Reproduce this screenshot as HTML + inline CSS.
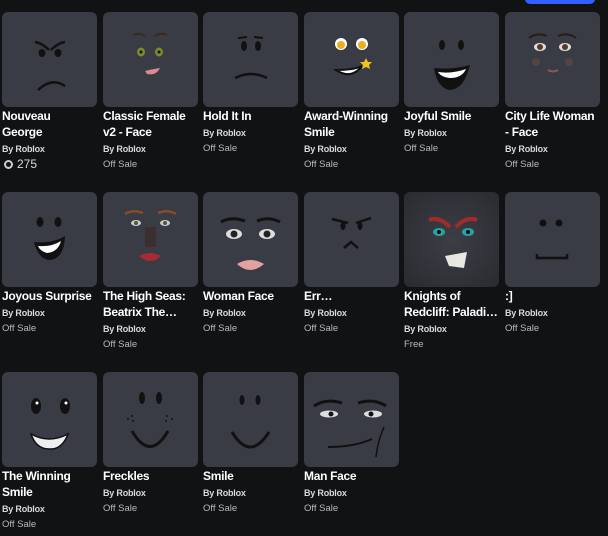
<!DOCTYPE html>
<html><head><meta charset="utf-8"><style>
*{margin:0;padding:0;box-sizing:border-box}
body{width:608px;height:536px;background:#111214;font-family:"Liberation Sans",sans-serif;position:relative;overflow:hidden;color:#fff}
.btn{position:absolute;left:525px;top:-6px;width:70px;height:10px;background:#335fff;border-radius:5px}
.c{position:absolute;width:96px}
.t{width:95px;height:95px;background:#393b45;border-radius:6px;overflow:hidden}
.t svg{display:block}
.n{font-size:12px;font-weight:bold;line-height:16px;margin-top:1px;letter-spacing:-0.3px}
.b{font-size:9px;font-weight:bold;color:#d8d9dc;line-height:14px;margin-top:2px;letter-spacing:-0.2px}
.p{font-size:9.5px;color:#b8b9bd;line-height:15px;margin-top:1px}
.p2{font-size:12px;color:#d8d9dc;line-height:16px}
</style></head><body>
<div class="btn"></div>

<!-- Row 1 -->
<div class="c" style="left:2px;top:12px"><div class="t"><svg width="95" height="95"><path d="M33 30 Q40 31 47 38" stroke="#111" stroke-width="2.5" fill="none"/><path d="M63 30 Q56 31 49 38" stroke="#111" stroke-width="2.5" fill="none"/><ellipse cx="40" cy="41" rx="3.5" ry="4" fill="#111"/><ellipse cx="56" cy="41" rx="3.5" ry="4" fill="#111"/><path d="M36 78 Q50 65 63 74" stroke="#111" stroke-width="2.5" fill="none"/></svg></div>
<div class="n">Nouveau<br>George</div><div class="b">By Roblox</div><div class="p2"><span style="display:inline-block;width:9px;height:9px;border:2px solid #ccc;border-radius:50%;margin:0 4px 0 2px;vertical-align:-1px"></span>275</div></div>

<div class="c" style="left:103px;top:12px"><div class="t"><svg width="95" height="95"><path d="M30 23 Q36 20 42 24" stroke="#3a2a1e" stroke-width="2" fill="none"/><path d="M52 24 Q58 20 64 23" stroke="#3a2a1e" stroke-width="2" fill="none"/><ellipse cx="38" cy="40" rx="4" ry="4.5" fill="#7d8a2a"/><ellipse cx="56" cy="40" rx="4" ry="4.5" fill="#7d8a2a"/><circle cx="38" cy="40" r="1.5" fill="#111"/><circle cx="56" cy="40" r="1.5" fill="#111"/><path d="M42 59 Q50 57 57 56 Q53 64 44 62Z" fill="#d88a8e"/></svg></div>
<div class="n">Classic Female<br>v2 - Face</div><div class="b">By Roblox</div><div class="p">Off Sale</div></div>

<div class="c" style="left:203px;top:12px"><div class="t"><svg width="95" height="95"><ellipse cx="41" cy="34" rx="3" ry="5" fill="#111"/><ellipse cx="55" cy="34" rx="3" ry="5" fill="#111"/><path d="M35 26 L44 25" stroke="#111" stroke-width="2" fill="none"/><path d="M51 25 L60 26" stroke="#111" stroke-width="2" fill="none"/><path d="M32 66 Q48 58 64 66" stroke="#111" stroke-width="2.5" fill="none"/></svg></div>
<div class="n">Hold It In</div><div class="b">By Roblox</div><div class="p">Off Sale</div></div>

<div class="c" style="left:304px;top:12px"><div class="t"><svg width="95" height="95"><circle cx="37" cy="32" r="6" fill="#fff"/><circle cx="58" cy="32" r="6" fill="#fff"/><circle cx="37" cy="33" r="4" fill="#e8b020"/><circle cx="58" cy="33" r="4" fill="#e8b020"/><path d="M32 58 Q47 68 58 54 Q50 58 32 58Z" fill="#fff" stroke="#111" stroke-width="2"/><path d="M62 46 l2 4 4 0 -3 3 1 4 -4 -2 -4 2 1 -4 -3 -3 4 0z" fill="#f2c21a"/></svg></div>
<div class="n">Award-Winning<br>Smile</div><div class="b">By Roblox</div><div class="p">Off Sale</div></div>

<div class="c" style="left:404px;top:12px"><div class="t"><svg width="95" height="95"><ellipse cx="38" cy="33" rx="3" ry="5" fill="#111"/><ellipse cx="57" cy="33" rx="3" ry="5" fill="#111"/><path d="M30 56 Q48 58 66 53 Q60 78 45 78 Q33 75 30 56Z" fill="#111"/><path d="M34 60 Q48 62 62 57 Q58 66 46 66 Q37 65 34 60Z" fill="#fff"/></svg></div>
<div class="n">Joyful Smile</div><div class="b">By Roblox</div><div class="p">Off Sale</div></div>

<div class="c" style="left:505px;top:12px"><div class="t"><svg width="95" height="95"><path d="M24 26 Q32 20 42 24" stroke="#2a1c14" stroke-width="2" fill="none"/><path d="M53 24 Q63 20 71 26" stroke="#2a1c14" stroke-width="2" fill="none"/><ellipse cx="35" cy="35" rx="6" ry="4" fill="#ddd"/><ellipse cx="60" cy="35" rx="6" ry="4" fill="#ddd"/><circle cx="35" cy="35" r="3" fill="#5a3a22"/><circle cx="60" cy="35" r="3" fill="#5a3a22"/><circle cx="31" cy="50" r="4" fill="#6a4a44" opacity=".6"/><circle cx="64" cy="50" r="4" fill="#6a4a44" opacity=".6"/><path d="M43 58 Q48 61 53 58" stroke="#8a5a5a" stroke-width="2" fill="none"/></svg></div>
<div class="n">City Life Woman<br>- Face</div><div class="b">By Roblox</div><div class="p">Off Sale</div></div>

<!-- Row 2 -->
<div class="c" style="left:2px;top:192px"><div class="t"><svg width="95" height="95"><ellipse cx="38" cy="30" rx="3.5" ry="5" fill="#111"/><ellipse cx="56" cy="30" rx="3.5" ry="5" fill="#111"/><path d="M32 50 Q50 52 63 44 Q62 68 46 68 Q36 66 32 50Z" fill="#111"/><path d="M36 54 Q50 55 59 49 Q56 60 45 61 Q38 59 36 54Z" fill="#fff"/></svg></div>
<div class="n">Joyous Surprise</div><div class="b">By Roblox</div><div class="p">Off Sale</div></div>

<div class="c" style="left:103px;top:192px"><div class="t"><svg width="95" height="95"><path d="M22 22 Q30 17 40 21" stroke="#8a4a2a" stroke-width="2.5" fill="none"/><path d="M55 21 Q65 17 73 22" stroke="#8a4a2a" stroke-width="2.5" fill="none"/><ellipse cx="33" cy="31" rx="5" ry="3" fill="#ccc"/><ellipse cx="62" cy="31" rx="5" ry="3" fill="#ccc"/><circle cx="33" cy="31" r="2" fill="#4a5a3a"/><circle cx="62" cy="31" r="2" fill="#4a5a3a"/><rect x="42" y="35" width="11" height="20" fill="#3a2a2a" opacity=".7"/><path d="M36 64 Q47 58 58 64 Q47 74 36 64Z" fill="#a82a34"/></svg></div>
<div class="n">The High Seas:<br>Beatrix The…</div><div class="b">By Roblox</div><div class="p">Off Sale</div></div>

<div class="c" style="left:203px;top:192px"><div class="t"><svg width="95" height="95"><path d="M18 30 Q28 24 42 29" stroke="#111" stroke-width="3" fill="none"/><path d="M54 29 Q66 24 77 30" stroke="#111" stroke-width="3" fill="none"/><ellipse cx="31" cy="42" rx="8" ry="5" fill="#ddd"/><ellipse cx="64" cy="42" rx="8" ry="5" fill="#ddd"/><circle cx="31" cy="42" r="3.5" fill="#222"/><circle cx="64" cy="42" r="3.5" fill="#222"/><path d="M34 72 Q47 64 61 72 Q47 84 34 72Z" fill="#e2a2a0"/></svg></div>
<div class="n">Woman Face</div><div class="b">By Roblox</div><div class="p">Off Sale</div></div>

<div class="c" style="left:304px;top:192px"><div class="t"><svg width="95" height="95"><path d="M28 27 L44 31" stroke="#111" stroke-width="2.5"/><path d="M52 31 L67 26" stroke="#111" stroke-width="2.5"/><ellipse cx="39" cy="34" rx="2.5" ry="4" fill="#111"/><ellipse cx="56" cy="34" rx="2.5" ry="4" fill="#111"/><path d="M40 56 L47 50 L54 56" stroke="#111" stroke-width="2.5" fill="none"/></svg></div>
<div class="n">Err…</div><div class="b">By Roblox</div><div class="p">Off Sale</div></div>

<div class="c" style="left:404px;top:192px"><div class="t" style="background:radial-gradient(circle at 50% 50%,#3c3e46,#2a2b30)"><svg width="95" height="95"><path d="M25 28 Q35 24 46 35" stroke="#a32a2a" stroke-width="4" fill="none"/><path d="M73 28 Q62 24 52 35" stroke="#a32a2a" stroke-width="4" fill="none"/><ellipse cx="35" cy="40" rx="6" ry="4" fill="#2aa0a0"/><ellipse cx="64" cy="40" rx="6" ry="4" fill="#2aa0a0"/><circle cx="35" cy="40" r="2" fill="#111"/><circle cx="64" cy="40" r="2" fill="#111"/><path d="M41 64 L63 60 L60 76 L45 74 Z" fill="#e8e8e0"/></svg></div>
<div class="n">Knights of<br>Redcliff: Paladi…</div><div class="b">By Roblox</div><div class="p">Free</div></div>

<div class="c" style="left:505px;top:192px"><div class="t"><svg width="95" height="95"><circle cx="38" cy="31" r="3.5" fill="#111"/><circle cx="54" cy="31" r="3.5" fill="#111"/><path d="M32 62 L32 66 L62 66 L62 62" stroke="#111" stroke-width="2.5" fill="none"/></svg></div>
<div class="n">:]</div><div class="b">By Roblox</div><div class="p">Off Sale</div></div>

<!-- Row 3 -->
<div class="c" style="left:2px;top:372px"><div class="t"><svg width="95" height="95"><ellipse cx="34" cy="34" rx="5" ry="8" fill="#111"/><ellipse cx="63" cy="34" rx="5" ry="8" fill="#111"/><circle cx="35" cy="31" r="1.5" fill="#fff"/><circle cx="64" cy="31" r="1.5" fill="#fff"/><path d="M29 62 Q47 72 66 62 Q60 78 47 77 Q34 77 29 62Z" fill="#eee" stroke="#111" stroke-width="1.5"/></svg></div>
<div class="n">The Winning<br>Smile</div><div class="b">By Roblox</div><div class="p">Off Sale</div></div>

<div class="c" style="left:103px;top:372px"><div class="t"><svg width="95" height="95"><ellipse cx="39" cy="26" rx="3" ry="6" fill="#111"/><ellipse cx="56" cy="26" rx="3" ry="6" fill="#111"/><circle cx="29" cy="44" r="1" fill="#111"/><circle cx="25" cy="47" r="1" fill="#111"/><circle cx="30" cy="49" r="1" fill="#111"/><circle cx="64" cy="44" r="1" fill="#111"/><circle cx="69" cy="47" r="1" fill="#111"/><circle cx="63" cy="49" r="1" fill="#111"/><path d="M29 59 Q47 90 65 59" stroke="#111" stroke-width="3" fill="none"/></svg></div>
<div class="n">Freckles</div><div class="b">By Roblox</div><div class="p">Off Sale</div></div>

<div class="c" style="left:203px;top:372px"><div class="t"><svg width="95" height="95"><ellipse cx="39" cy="28" rx="2.5" ry="5" fill="#111"/><ellipse cx="55" cy="28" rx="2.5" ry="5" fill="#111"/><path d="M29 60 Q47 90 66 60" stroke="#111" stroke-width="3" fill="none"/></svg></div>
<div class="n">Smile</div><div class="b">By Roblox</div><div class="p">Off Sale</div></div>

<div class="c" style="left:304px;top:372px"><div class="t"><svg width="95" height="95"><path d="M10 34 Q22 26 38 31" stroke="#111" stroke-width="3" fill="none"/><path d="M54 31 Q70 26 82 34" stroke="#111" stroke-width="3" fill="none"/><ellipse cx="25" cy="42" rx="9" ry="3.5" fill="#ddd"/><ellipse cx="69" cy="42" rx="9" ry="3.5" fill="#ddd"/><circle cx="27" cy="42" r="2.5" fill="#111"/><circle cx="67" cy="42" r="2.5" fill="#111"/><path d="M24 75 Q50 75 68 67" stroke="#111" stroke-width="2" fill="none"/><path d="M80 55 Q74 68 72 85" stroke="#111" stroke-width="1.5" fill="none"/></svg></div>
<div class="n">Man Face</div><div class="b">By Roblox</div><div class="p">Off Sale</div></div>

</body></html>
